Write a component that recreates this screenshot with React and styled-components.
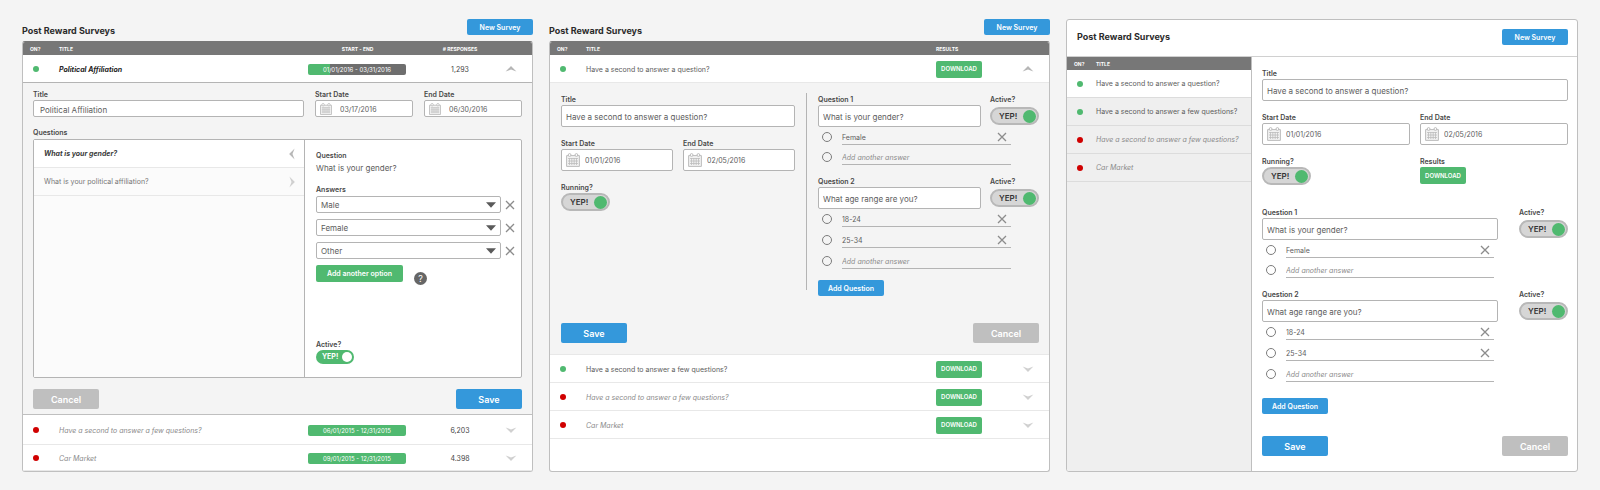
import React, { useId } from "react";
import styled, { createGlobalStyle, css } from "styled-components";

const c = {
  page: "#f4f4f4",
  line: "#b4b4b4",
  soft: "#d0d0d0",
  row: "#e8e8e8",
  head: "#777777",
  ink: "#2b2b2b",
  text: "#5c5c5c",
  muted: "#8a8a8a",
  blue: "#3498db",
  green: "#50b970",
  red: "#d00000",
  grey: "#bfbfbf",
};

const GlobalStyle = createGlobalStyle`
  *, *::before, *::after { box-sizing: border-box; }
  body { margin: 0; background: ${c.page}; }
  body, button, input, select { font-family: Inter, "Open Sans", sans-serif; }
  h2 { margin: 0; }
`;

/* ---------- page ---------- */

const Page = styled.main`
  display: grid;
  grid-template-columns: 511fr 501fr 512fr;
  gap: 16px;
  padding: 19px 22px 20px;
  color: ${c.text};
  font-size: 8px;
  line-height: 12px;
`;

const Panel = styled.section`
  display: flex;
  flex-direction: column;
  min-width: 0;
`;

const PanelTop = styled.header`
  display: flex;
  justify-content: space-between;
  align-items: flex-start;
  height: 22px;
`;

const Heading = styled.h2`
  font-size: 9px;
  line-height: 16px;
  font-weight: 700;
  color: ${c.ink};
  padding-top: ${(p) => (p.$low ? 4 : 0)}px;
`;

const Card = styled.div`
  flex: 1;
  display: flex;
  flex-direction: column;
  border: 1px solid ${c.grey};
  border-top-color: ${(p) => (p.$plainTop ? c.grey : c.head)};
  border-radius: 3px;
  overflow: hidden;
  background: #fff;
`;

/* ---------- buttons ---------- */

const Button = styled.button`
  border: 0;
  border-radius: 2px;
  padding: 1px 0 0;
  width: 66px;
  height: 16px;
  color: #fff;
  background: ${(p) => c[p.$tone || "blue"]};
  font-size: 7px;
  line-height: 12px;
  font-weight: 600;
  white-space: nowrap;
  cursor: pointer;
  ${(p) => p.$size === "large" && css`
    height: 20px;
    font-size: 9px;
  `}
  ${(p) => p.$size === "wide" && css`
    width: 87px;
    height: 17px;
  `}
  ${(p) => p.$size === "tag" && css`
    width: 46px;
    height: 17px;
    font-size: 6px;
    padding: 0;
  `}
`;

const IconButton = styled.button`
  display: inline-flex;
  align-items: center;
  justify-content: center;
  vertical-align: middle;
  border: 0;
  padding: 0;
  background: none;
  color: ${(p) => p.$color || "#8c8c8c"};
  cursor: pointer;
  svg { display: block; }
`;

const Help = styled.button`
  width: 13px;
  height: 13px;
  margin: 7px 0 0 11px;
  padding: 0;
  border: 0;
  border-radius: 50%;
  background: #666;
  color: #fff;
  font-size: 9px;
  line-height: 13px;
`;

/* ---------- survey table ---------- */

const Table = styled.table`
  width: 100%;
  table-layout: fixed;
  border-spacing: 0;
`;

const Col = styled.col`
  width: ${(p) => (p.$w ? `${p.$w}px` : "auto")};
`;

const Th = styled.th`
  height: 13px;
  padding: 1px 0 0 ${(p) => p.$left || 0}px;
  background: ${c.head};
  color: #fff;
  font-size: 5px;
  line-height: 8px;
  font-weight: 700;
  text-align: ${(p) => p.$align || "left"};
`;

const Row = styled.tr`
  td {
    height: ${(p) => p.$h || 28}px;
    background: ${(p) => p.$bg || "#fff"};
    border-bottom: 1px solid ${(p) => p.$border || c.row};
  }
`;

const Td = styled.td`
  padding: ${(p) => p.$top || 0}px 0 0 ${(p) => p.$left || 0}px;
  text-align: ${(p) => p.$align || "left"};
  color: ${(p) => (p.$strong ? "#444" : c.text)};
  font-size: 7px;
  white-space: nowrap;
`;

const Name = styled.span`
  color: ${(p) => (p.$bold ? "#222" : p.$off ? c.muted : c.text)};
  font-style: ${(p) => (p.$bold || p.$off ? "italic" : "normal")};
  font-weight: ${(p) => (p.$bold ? 700 : 400)};
`;

const Dot = styled.span`
  display: block;
  width: 6px;
  height: 6px;
  border-radius: 50%;
  background: ${(p) => (p.$on ? c.green : c.red)};
`;

const Period = styled.span`
  display: block;
  width: 98px;
  height: 11px;
  border-radius: 2px;
  background: linear-gradient(to right, ${c.green} ${(p) => p.$done}%, #6e6e6e ${(p) => p.$done}%);
  color: #fff;
  font-size: 6px;
  line-height: 11px;
  text-align: center;
`;

const DetailCell = styled.td`
  padding: ${(p) => p.$pad};
  background: ${c.page};
  border-bottom: 1px solid ${(p) => p.$border || c.row};
  vertical-align: top;
`;

/* ---------- form parts ---------- */

const Field = styled.div`
  display: flex;
  flex-direction: column;
  align-items: ${(p) => (p.$hug ? "flex-start" : "stretch")};
  min-width: 0;
`;

const caption = css`
  padding-top: 2px;
  font-size: 7px;
  line-height: 10px;
  font-weight: 600;
  color: #484848;
`;

const Label = styled.label`
  ${caption}
`;

const Caption = styled.span`
  ${caption}
`;

const box = css`
  width: 100%;
  min-width: 0;
  height: ${(p) => (p.$short ? 17 : 22)}px;
  border: 1px solid ${c.line};
  border-radius: 2px;
  background: #fff;
  color: ${c.text};
`;

const TextInput = styled.input`
  ${box}
  padding: 2px 6px 0 ${(p) => (p.$short ? 6 : 4)}px;
  font-size: 8px;
`;

const DateBox = styled.div`
  ${box}
  display: flex;
  align-items: center;
  gap: ${(p) => (p.$short ? 8 : 5)}px;
  padding: 0 4px;
  color: #bcbcbc;
  svg { flex: none; }
  input {
    flex: 1;
    min-width: 0;
    border: 0;
    padding: 1px 0 0;
    background: none;
    color: ${c.text};
    font-size: 7px;
  }
`;

const SelectBox = styled.div`
  flex: 1;
  display: grid;
  align-items: center;
  select, svg { grid-area: 1 / 1; }
  select {
    ${box}
    height: 17px;
    appearance: none;
    padding: 1px 4px 0;
    font-size: 8px;
  }
  svg { justify-self: end; margin-right: 5px; pointer-events: none; }
`;

const Track = styled.span`
  position: relative;
  display: flex;
  align-items: center;
  justify-content: space-between;
  width: ${(p) => (p.$solid ? 38 : 49)}px;
  height: ${(p) => (p.$solid ? 14 : 18)}px;
  padding: 0 ${(p) => (p.$solid ? 2 : 1)}px 0 ${(p) => (p.$solid ? 6 : 7)}px;
  border: ${(p) => (p.$solid ? "0" : "2px solid #b8b8b8")};
  border-radius: 9px;
  background: ${(p) => (p.$solid ? c.green : "#d6d6d6")};
  color: ${(p) => (p.$solid ? "#fff" : "#333")};
  font-size: ${(p) => (p.$solid ? 7 : 8)}px;
  font-weight: ${(p) => (p.$solid ? 700 : 600)};
  input {
    position: absolute;
    inset: 0;
    width: 100%;
    height: 100%;
    margin: 0;
    opacity: 0;
  }
  &::after {
    content: "";
    width: ${(p) => (p.$solid ? 10 : 13)}px;
    height: ${(p) => (p.$solid ? 10 : 13)}px;
    border-radius: 50%;
    background: ${(p) => (p.$solid ? "#fff" : c.green)};
  }
`;

const Pair = styled.div`
  display: grid;
  grid-template-columns: 1fr 1fr;
  gap: 10px;
`;

const Stack = styled.div`
  display: flex;
  flex-direction: column;
  gap: 10px;
  min-width: 0;
`;

const Footer = styled.div`
  display: flex;
  justify-content: space-between;
  margin-top: ${(p) => p.$top}px;
`;

const QuestionGrid = styled.div`
  display: grid;
  grid-template-columns: minmax(0, 1fr) 49px;
  column-gap: ${(p) => (p.$wide ? 21 : 9)}px;
  align-items: center;
`;

const Answers = styled.ul`
  grid-column: 1 / -1;
  list-style: none;
  display: flex;
  flex-direction: column;
  gap: ${(p) => (p.$roomy ? 3 : 2)}px;
  margin: 0;
  padding: 0 ${(p) => (p.$wide ? 74 : 28)}px 0 4px;
`;

const Answer = styled.li`
  display: flex;
  gap: 10px;
  height: 18px;
  input[type="radio"] {
    appearance: none;
    flex: none;
    width: 10px;
    height: 10px;
    margin: 5px 0 0;
    border: 1px solid #7c7c7c;
    border-radius: 50%;
  }
`;

const AnswerLine = styled.div`
  flex: 1;
  display: flex;
  align-items: center;
  min-width: 0;
  padding: 3px 4px 0 0;
  border-bottom: 1px solid ${c.line};
  input {
    flex: 1;
    min-width: 0;
    border: 0;
    padding: 0;
    background: none;
    color: ${c.text};
    font-size: 7px;
    &::placeholder { color: ${c.muted}; font-style: italic; opacity: 1; }
  }
`;

/* ---------- panel one: question browser ---------- */

const TopFields = styled.div`
  display: grid;
  grid-template-columns: 271fr 98fr 98fr;
  gap: 11px;
  margin-bottom: 9px;
`;

const Browser = styled.div`
  display: grid;
  grid-template-columns: 270fr 217fr;
  margin-top: 1px;
  border: 1px solid ${c.line};
  border-radius: 2px;
  background: #fff;
`;

const QuestionList = styled.ul`
  list-style: none;
  margin: 0;
  padding: 0;
  background: #fbfbfb;
`;

const QuestionItem = styled.li`
  display: flex;
  align-items: center;
  justify-content: space-between;
  height: 28px;
  padding: 0 6px 0 10px;
  border-bottom: 1px solid ${c.row};
  background: ${(p) => (p.$active ? "#fff" : "transparent")};
  color: ${(p) => (p.$active ? "#3a3a3a" : "#777")};
  font-size: 7px;
  font-weight: ${(p) => (p.$active ? 700 : 400)};
  font-style: ${(p) => (p.$active ? "italic" : "normal")};
`;

const QuestionPane = styled.div`
  display: flex;
  flex-direction: column;
  align-items: stretch;
  padding: 9px 6px 13px 11px;
  border-left: 1px solid ${c.line};
`;

const Options = styled.div`
  display: flex;
  flex-direction: column;
  gap: 6px;
  padding: 1px 0 6px;
`;

const OptionRow = styled.div`
  display: flex;
  align-items: center;
  gap: 4px;
`;

const Inline = styled.div`
  display: flex;
  align-items: flex-start;
  margin-bottom: 53px;
`;

const Prompt = styled.p`
  margin: 0;
  padding: 1px 0 9px;
`;

/* ---------- panel two ---------- */

const Columns = styled.div`
  display: grid;
  grid-template-columns: 234fr 1px 221fr;
  column-gap: 11px;
`;

const Divider = styled.div`
  background: ${c.line};
  margin-bottom: 6px;
`;

const Push = styled.div`
  margin-top: ${(p) => p.$top}px;
  display: flex;
`;

/* ---------- panel three ---------- */

const CardTop = styled.header`
  display: flex;
  justify-content: space-between;
  align-items: center;
  height: 37px;
  padding: 0 9px 2px 10px;
  border-bottom: 1px solid ${c.soft};
`;

const Split = styled.div`
  flex: 1;
  display: grid;
  grid-template-columns: 185fr 325fr;
`;

const Sidebar = styled.div`
  background: #efefef;
  border-right: 1px solid ${c.grey};
`;

const Form = styled.div`
  display: flex;
  flex-direction: column;
  padding: 10px 9px 14px 10px;
`;

/* ---------- icons ---------- */

const turns = { up: 0, right: 90, down: 180, left: 270 };

const Chevron = ({ dir }) => (
  <svg width="12" height="12" viewBox="0 0 12 12" aria-hidden="true">
    <path d="M.6 8.6 6 3.1l5.4 5.5L6 6.5z" fill="currentColor" transform={`rotate(${turns[dir]} 6 6)`} />
  </svg>
);

const Cross = () => (
  <svg width="10" height="10" viewBox="0 0 10 10" aria-hidden="true">
    <path d="M1 1l8 8M9 1L1 9" stroke="currentColor" strokeWidth="1.3" fill="none" />
  </svg>
);

const Calendar = ({ size = 14 }) => (
  <svg width={size} height={size} viewBox="0 0 14 14" aria-hidden="true" fill="none" stroke="currentColor">
    <path d="M.6 2.6h12.8v10.8H.6z" fill="#f2f2f2" />
    <path d="M2 5.5h10M2 8h10M2 10.5h10M3.5 5v7M5.8 5v7M8.2 5v7M10.5 5v7" strokeWidth=".8" />
    <circle cx="3.6" cy="2" r="1.4" fill="#fff" />
    <circle cx="10.4" cy="2" r="1.4" fill="#fff" />
  </svg>
);

const Caret = () => (
  <svg width="10" height="6" viewBox="0 0 10 6" aria-hidden="true">
    <path d="M0 .3h10L5 5.8z" fill="#5a5a5a" />
  </svg>
);

/* ---------- composed controls ---------- */

function TextField({ label, value, short }) {
  const id = useId();
  return (
    <Field>
      <Label htmlFor={id}>{label}</Label>
      <TextInput id={id} $short={short} defaultValue={value} />
    </Field>
  );
}

function DateField({ label, value, short }) {
  const id = useId();
  return (
    <Field>
      <Label htmlFor={id}>{label}</Label>
      <DateBox $short={short}>
        <Calendar size={short ? 12 : 14} />
        <input id={id} defaultValue={value} />
      </DateBox>
    </Field>
  );
}

const Switch = ({ id, solid }) => (
  <Track $solid={solid}>
    <input type="checkbox" id={id} defaultChecked />
    YEP!
  </Track>
);

function SwitchField({ label, solid }) {
  const id = useId();
  return (
    <Field $hug>
      <Label htmlFor={id}>{label}</Label>
      <Switch id={id} solid={solid} />
    </Field>
  );
}

function Question({ n, text, answers, wide, roomy }) {
  const id = useId();
  return (
    <QuestionGrid $wide={wide}>
      <Label htmlFor={id}>Question {n}</Label>
      <Label htmlFor={id + "s"}>Active?</Label>
      <TextInput id={id} defaultValue={text} />
      <Switch id={id + "s"} />
      <Answers $wide={wide} $roomy={roomy}>
        {[...answers, null].map((a, i) => (
          <Answer key={i}>
            <input type="radio" name={id} aria-label={a || "New answer"} />
            <AnswerLine>
              <input aria-label="Answer" defaultValue={a || ""} placeholder="Add another answer" />
              {a && <IconButton aria-label={`Remove ${a}`}><Cross /></IconButton>}
            </AnswerLine>
          </Answer>
        ))}
      </Answers>
    </QuestionGrid>
  );
}

const questions = [
  { n: 1, text: "What is your gender?", answers: ["Female"] },
  { n: 2, text: "What age range are you?", answers: ["18-24", "25-34"], roomy: true },
];

const surveys = [
  { name: "Have a second to answer a question?", on: true },
  { name: "Have a second to answer a few questions?", on: true },
  { name: "Have a second to answer a few questions?", on: false },
  { name: "Car Market", on: false },
];

/* ---------- panels ---------- */

function SurveyRow({ name, on, open, done, period, count, h }) {
  return (
    <Row $h={h} $border={open ? c.line : undefined}>
      <Td $top={1} $left={10}><Dot $on={on} /></Td>
      <Td $top={2}><Name $bold={open} $off={!on}>{name}</Name></Td>
      <Td $top={1}><Period $done={done}>{period}</Period></Td>
      <Td $top={2} $left={24} $align="center" $strong>{count}</Td>
      <Td $align="center">
        <IconButton $color={open ? "#b5b5b5" : "#d0d0d0"} aria-label={open ? "Collapse" : "Expand"}>
          <Chevron dir={open ? "up" : "down"} />
        </IconButton>
      </Td>
    </Row>
  );
}

function PanelOne() {
  return (
    <Panel>
      <PanelTop>
        <Heading $low>Post Reward Surveys</Heading>
        <Button>New Survey</Button>
      </PanelTop>
      <Card>
        <Table>
          <colgroup>
            <Col $w={36} /><Col /><Col $w={99} /><Col $w={82} /><Col $w={43} />
          </colgroup>
          <thead>
            <tr>
              <Th $left={7}>ON?</Th><Th>TITLE</Th><Th $align="center">START - END</Th>
              <Th $left={24} $align="center"># RESPONSES</Th><Th />
            </tr>
          </thead>
          <tbody>
            <SurveyRow name="Political Affiliation" on open done={22} period="01/01/2016 - 03/31/2016" count="1,293" />
            <tr>
              <DetailCell colSpan={5} $pad="5px 10px" $border={c.grey}>
                <TopFields>
                  <TextField label="Title" value="Political Affiliation" short />
                  <DateField label="Start Date" value="03/17/2016" short />
                  <DateField label="End Date" value="06/30/2016" short />
                </TopFields>
                <Field>
                  <Caption>Questions</Caption>
                  <Browser>
                    <QuestionList>
                      <QuestionItem $active>
                        What is your gender?
                        <IconButton $color="#b8b8b8" aria-label="Close question"><Chevron dir="left" /></IconButton>
                      </QuestionItem>
                      <QuestionItem>
                        What is your political affiliation?
                        <IconButton $color="#d0d0d0" aria-label="Open question"><Chevron dir="right" /></IconButton>
                      </QuestionItem>
                    </QuestionList>
                    <QuestionPane>
                      <Caption>Question</Caption>
                      <Prompt>What is your gender?</Prompt>
                      <Caption>Answers</Caption>
                      <Options>
                        {["Male", "Female", "Other"].map((o) => (
                          <OptionRow key={o}>
                            <SelectBox>
                              <select aria-label={`Answer ${o}`} defaultValue={o}><option>{o}</option></select>
                              <Caret />
                            </SelectBox>
                            <IconButton aria-label={`Remove ${o}`}><Cross /></IconButton>
                          </OptionRow>
                        ))}
                      </Options>
                      <Inline>
                        <Button $tone="green" $size="wide">Add another option</Button>
                        <Help aria-label="Help">?</Help>
                      </Inline>
                      <SwitchField label="Active?" solid />
                    </QuestionPane>
                  </Browser>
                </Field>
                <Footer $top={11}>
                  <Button $tone="grey" $size="large">Cancel</Button>
                  <Button $size="large">Save</Button>
                </Footer>
              </DetailCell>
            </tr>
            <SurveyRow h={30} name={surveys[2].name} done={100} period="06/01/2015 - 12/31/2015" count="6,203" />
            <SurveyRow h={26} name="Car Market" done={100} period="09/01/2015 - 12/31/2015" count="4.398" />
          </tbody>
        </Table>
      </Card>
    </Panel>
  );
}

function ResultRow({ name, on, open }) {
  return (
    <Row>
      <Td $top={1} $left={10}><Dot $on={on} /></Td>
      <Td $top={2}><Name $off={!on}>{name}</Name></Td>
      <Td $top={1}><Button $tone="green" $size="tag">DOWNLOAD</Button></Td>
      <Td $align="center">
        <IconButton $color={open ? "#b5b5b5" : "#d0d0d0"} aria-label={open ? "Collapse" : "Expand"}>
          <Chevron dir={open ? "up" : "down"} />
        </IconButton>
      </Td>
    </Row>
  );
}

function PanelTwo() {
  return (
    <Panel>
      <PanelTop>
        <Heading $low>Post Reward Surveys</Heading>
        <Button>New Survey</Button>
      </PanelTop>
      <Card>
        <Table>
          <colgroup>
            <Col $w={36} /><Col /><Col $w={70} /><Col $w={43} />
          </colgroup>
          <thead>
            <tr><Th $left={7}>ON?</Th><Th>TITLE</Th><Th>RESULTS</Th><Th /></tr>
          </thead>
          <tbody>
            <ResultRow {...surveys[0]} open />
            <tr>
              <DetailCell colSpan={4} $pad="10px 10px 11px 11px">
                <Columns>
                  <Stack>
                    <TextField label="Title" value="Have a second to answer a question?" />
                    <Pair>
                      <DateField label="Start Date" value="01/01/2016" />
                      <DateField label="End Date" value="02/05/2016" />
                    </Pair>
                    <SwitchField label="Running?" />
                  </Stack>
                  <Divider />
                  <Stack>
                    {questions.map((q) => <Question key={q.n} {...q} />)}
                    <Push $top={1}><Button>Add Question</Button></Push>
                  </Stack>
                </Columns>
                <Footer $top={27}>
                  <Button $size="large">Save</Button>
                  <Button $tone="grey" $size="large">Cancel</Button>
                </Footer>
              </DetailCell>
            </tr>
            {surveys.slice(1).map((s, i) => <ResultRow key={i} {...s} />)}
          </tbody>
        </Table>
      </Card>
    </Panel>
  );
}

function PanelThree() {
  return (
    <Panel>
      <Card $plainTop>
        <CardTop>
          <Heading>Post Reward Surveys</Heading>
          <Button>New Survey</Button>
        </CardTop>
        <Split>
          <Sidebar>
            <Table>
              <colgroup><Col $w={29} /><Col /></colgroup>
              <thead><tr><Th $left={7}>ON?</Th><Th>TITLE</Th></tr></thead>
              <tbody>
                {surveys.map((s, i) => (
                  <Row key={i} $bg={i ? "#efefef" : "#fff"} $border="#dcdcdc">
                    <Td $left={10}><Dot $on={s.on} /></Td>
                    <Td><Name $off={!s.on}>{s.name}</Name></Td>
                  </Row>
                ))}
              </tbody>
            </Table>
          </Sidebar>
          <Form>
            <Stack>
              <TextField label="Title" value="Have a second to answer a question?" />
              <Pair>
                <DateField label="Start Date" value="01/01/2016" />
                <DateField label="End Date" value="02/05/2016" />
              </Pair>
              <Pair>
                <SwitchField label="Running?" />
                <Field $hug>
                  <Caption>Results</Caption>
                  <Button $tone="green" $size="tag">DOWNLOAD</Button>
                </Field>
              </Pair>
              <Push $top={1} />
              {questions.map((q) => <Question key={q.n} {...q} wide />)}
              <Push $top={6}><Button>Add Question</Button></Push>
            </Stack>
            <Footer $top={22}>
              <Button $size="large">Save</Button>
              <Button $tone="grey" $size="large">Cancel</Button>
            </Footer>
          </Form>
        </Split>
      </Card>
    </Panel>
  );
}

export default function App() {
  return (
    <>
      <GlobalStyle />
      <Page>
        <PanelOne />
        <PanelTwo />
        <PanelThree />
      </Page>
    </>
  );
}
